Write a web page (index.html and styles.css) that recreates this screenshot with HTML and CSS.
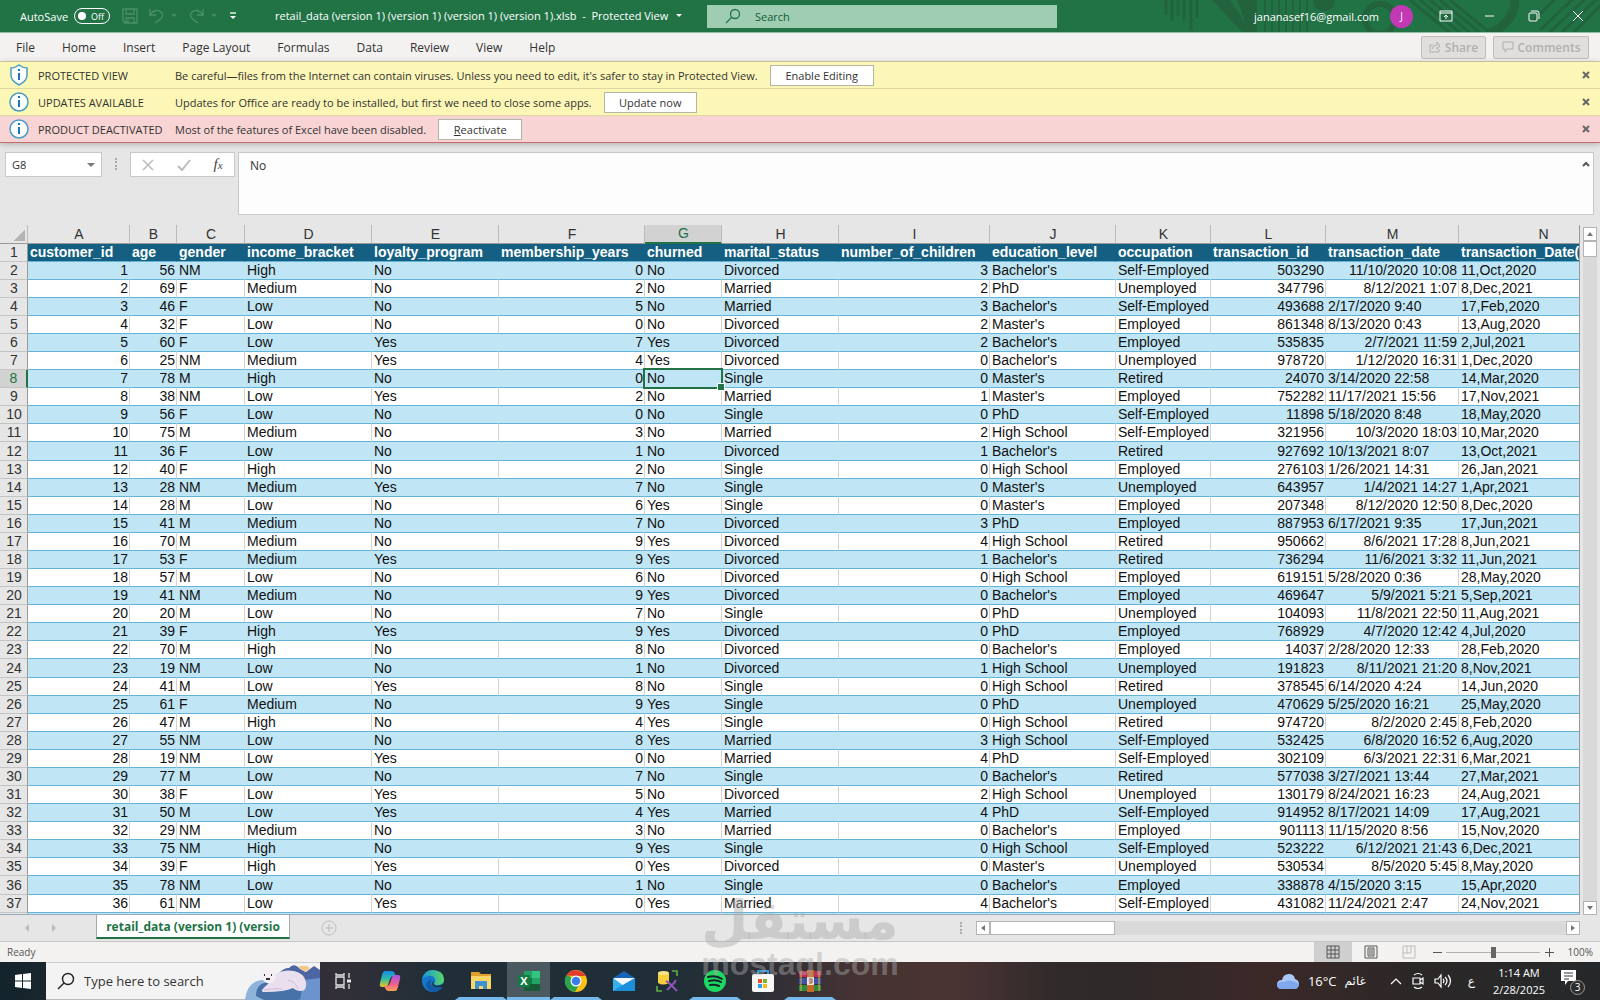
FILE: index.html
```html
<!DOCTYPE html>
<html lang="en">
<head>
    <meta charset="UTF-8">
    <meta name="viewport" content="width=device-width, initial-scale=1.0">
    <title>retail_data - Excel</title>
    <link rel="stylesheet" href="styles.css">
</head>
<body>
    <header class="titlebar">
        <svg class="titlebar-art" width="460" height="32" viewBox="0 0 460 32" fill="none" stroke="#22633e" stroke-width="3">
            <path d="M26 0v15M32 0v21M38 0v16M44 0v21M51 0v30M57 0v18"/>
            <path d="M72 0h18l22 32h-10zM97 0h20v32h-8z" fill="#22633e" stroke="none"/>
            <path d="M125 0v32M132 0v32M139 0v32M146 0v32M153 0v32M160 0v32M167 0v32" stroke-width="2"/>
            <circle cx="184" cy="0" r="11" fill="#22633e" stroke="none"/>
            <circle cx="240" cy="19" r="15" stroke-width="6"/>
            <path d="M270 0l44 36M280 0l44 36M290 0l44 36M300 0l44 36M310 0l44 36"/>
            <path d="M375 0q0 22-26 34" stroke-width="9"/>
            <path d="M400 30l36-34M410 32l36-34M422 32l36-34M434 32l30-30M392 22l26-26"/>
        </svg>
        <label class="autosave">AutoSave <span class="toggle"><input type="checkbox">Off</span></label>
        <div class="quick-access">
            <button aria-label="Save"><svg width="16" height="16" viewBox="0 0 16 16"><path d="M1 1h14v14H3l-2-2zM4 1v5h8V1M4 15v-5h8v5M6 12v3"/></svg></button>
            <button aria-label="Undo"><svg width="30" height="16" viewBox="0 0 30 16"><path d="M2 1v6h6M2 7c3-5 8-6 11-3s2 6-6 11"/><path d="M24 6l2 2 2-2"/></svg></button>
            <button aria-label="Redo"><svg width="30" height="16" viewBox="0 0 30 16"><path d="M15 1v6H9M15 7C12 2 7 1 4 4s-2 6 6 11"/><path d="M24 6l2 2 2-2"/></svg></button>
            <button class="customize" aria-label="Customize toolbar"><svg width="10" height="10" viewBox="0 0 10 10"><path d="M2 2h6"/><path d="M2 5h6L5 8z" fill="#fff" stroke="none"/></svg></button>
        </div>
        <div class="doc-title">retail_data (version 1) (version 1) (version 1) (version 1).xlsb&nbsp; -&nbsp; Protected View <span class="caret"></span></div>
        <div class="search">
            <svg width="16" height="16" viewBox="0 0 16 16" fill="none" stroke="#217346" stroke-width="1.3"><circle cx="10" cy="6" r="4.5"/><path d="M7 9l-6 6"/></svg>
            <input type="search" aria-label="Search" placeholder="Search">
        </div>
        <div class="account">
            <span>jananasef16@gmail.com</span>
            <span class="avatar">J</span>
        </div>
        <div class="window-buttons">
            <button aria-label="Ribbon display options"><svg width="14" height="12" viewBox="0 0 14 12"><path d="M1 1h12v10H1zM1 3h12M7 9V5M5 7l2-2 2 2"/></svg></button>
            <button aria-label="Minimize"><svg width="12" height="12" viewBox="0 0 12 12"><path d="M1 6h9"/></svg></button>
            <button aria-label="Restore"><svg width="12" height="12" viewBox="0 0 12 12"><path d="M1 4q0-1 1-1h6q1 0 1 1v6q0 1-1 1H2q-1 0-1-1zM3 1h6q2 0 2 2v6"/></svg></button>
            <button aria-label="Close"><svg width="12" height="12" viewBox="0 0 12 12"><path d="M1 1l10 10M11 1L1 11"/></svg></button>
        </div>
    </header>

    <nav class="ribbon-tabs">
        <button>File</button>
        <button>Home</button>
        <button>Insert</button>
        <button>Page Layout</button>
        <button>Formulas</button>
        <button>Data</button>
        <button>Review</button>
        <button>View</button>
        <button>Help</button>
        <div class="ribbon-right">
            <button class="share" disabled><svg width="12" height="12" viewBox="0 0 12 12"><path d="M4 4H1v7h9V8M3 8q1-4 5-4V1l3 4-3 3V6"/></svg>Share</button>
            <button class="comments" disabled><svg width="12" height="12" viewBox="0 0 12 12"><path d="M1 1h10v7H5l-2 3V8H1z"/></svg>Comments</button>
        </div>
    </nav>

    <section class="messages">
        <div class="message">
            <svg class="message-icon" width="20" height="22" viewBox="0 0 20 22"><path d="M10 1q4 3 8 3v7q0 6-8 10Q2 17 2 11V4q4 0 8-3z" fill="#fff" stroke="#4a9cc4" stroke-width="1.5"/><path d="M10 9v7M10 5v2" stroke="#1a75c0" stroke-width="2"/></svg>
            <span class="message-title">PROTECTED VIEW</span>
            <span>Be careful—files from the Internet can contain viruses. Unless you need to edit, it's safer to stay in Protected View.</span>
            <button class="message-action enable">Enable Editing</button>
            <button class="message-close" aria-label="Close"><svg width="8" height="8" viewBox="0 0 8 8"><path d="M1 1l6 6M7 1L1 7"/></svg></button>
        </div>
        <div class="message">
            <svg class="message-icon" width="20" height="22" viewBox="0 0 20 22"><circle cx="10" cy="11" r="9" fill="#fff" stroke="#4a9cc4" stroke-width="1.5"/><path d="M10 9v7M10 5v2" stroke="#1a75c0" stroke-width="2"/></svg>
            <span class="message-title">UPDATES AVAILABLE</span>
            <span>Updates for Office are ready to be installed, but first we need to close some apps.</span>
            <button class="message-action update">Update now</button>
            <button class="message-close" aria-label="Close"><svg width="8" height="8" viewBox="0 0 8 8"><path d="M1 1l6 6M7 1L1 7"/></svg></button>
        </div>
        <div class="message error">
            <svg class="message-icon" width="20" height="22" viewBox="0 0 20 22"><circle cx="10" cy="11" r="9" fill="#fff" stroke="#4a9cc4" stroke-width="1.5"/><path d="M10 9v7M10 5v2" stroke="#1a75c0" stroke-width="2"/></svg>
            <span class="message-title">PRODUCT DEACTIVATED</span>
            <span>Most of the features of Excel have been disabled.</span>
            <button class="message-action reactivate"><u>R</u>eactivate</button>
            <button class="message-close" aria-label="Close"><svg width="8" height="8" viewBox="0 0 8 8"><path d="M1 1l6 6M7 1L1 7"/></svg></button>
        </div>
    </section>

    <section class="formula-bar">
        <div class="name-box">
            <input type="text" aria-label="Name box" value="G8">
            <span class="caret"></span>
        </div>
        <span class="dots"></span>
        <div class="formula-buttons">
            <button aria-label="Cancel"><svg width="12" height="12" viewBox="0 0 12 12"><path d="M1 1l10 10M11 1L1 11"/></svg></button>
            <button aria-label="Enter"><svg width="14" height="12" viewBox="0 0 14 12"><path d="M1 7l4 4 8-10" stroke-width="2"/></svg></button>
            <button class="fx" aria-label="Insert function">f<sub>x</sub></button>
        </div>
        <div class="formula-input">
            <textarea aria-label="Formula">No</textarea>
            <svg width="8" height="8" viewBox="0 0 8 8"><path d="M1 6l3-3 3 3" fill="none" stroke="#555" stroke-width="2"/></svg>
        </div>
    </section>

    <main class="grid-area">
        <div class="grid">
            <table class="sheet">
                <colgroup>
                    <col class="col-row"><col class="col-a"><col class="col-b"><col class="col-c"><col class="col-d">
                    <col class="col-e"><col class="col-f"><col class="col-g"><col class="col-h"><col class="col-i">
                    <col class="col-j"><col class="col-k"><col class="col-l"><col class="col-m"><col class="col-n">
                </colgroup>
                <thead>
                    <tr>
                        <th class="corner"></th>
                        <th>A</th><th>B</th><th>C</th><th>D</th><th>E</th><th>F</th><th class="current">G</th>
                        <th>H</th><th>I</th><th>J</th><th>K</th><th>L</th><th>M</th><th>N</th>
                    </tr>
                </thead>
                <tbody id="rows"></tbody>
            </table>
        </div>
        <div class="v-scroll">
            <button class="scroll-btn up" aria-label="Scroll up"></button>
            <div class="v-thumb"></div>
            <button class="scroll-btn down" aria-label="Scroll down"></button>
        </div>
    </main>

    <section class="sheet-tabs">
        <div class="tab-arrows"><span class="arrow-left"></span><span class="arrow-right"></span></div>
        <button class="sheet-tab">retail_data (version 1) (versio</button>
        <button class="add-sheet" aria-label="New sheet"><svg width="16" height="16" viewBox="0 0 16 16"><circle cx="8" cy="8" r="7"/><path d="M8 4v8M4 8h8"/></svg></button>
        <span class="dots"></span>
        <div class="h-scroll">
            <button class="scroll-btn left" aria-label="Scroll left"></button>
            <div class="h-thumb"></div>
            <button class="scroll-btn right" aria-label="Scroll right"></button>
        </div>
    </section>

    <section class="status">
        <span>Ready</span>
        <div class="status-right">
            <button class="view selected" aria-label="Normal"><svg width="14" height="14" viewBox="0 0 14 14"><path d="M1 1h12v12H1zM5 1v12M9 1v12M1 5h12M1 9h12"/></svg></button>
            <button class="view" aria-label="Page layout"><svg width="14" height="14" viewBox="0 0 14 14"><path d="M1 1h12v12H1zM4 3h6v8H4zM5 5h4M5 7h4M5 9h4"/></svg></button>
            <button class="view faded" aria-label="Page break preview"><svg width="14" height="14" viewBox="0 0 14 14"><path d="M1 1h12v12H1zM5 1v7M9 1v7M1 8h8"/></svg></button>
            <button class="zoom-btn" aria-label="Zoom out"><svg width="9" height="9" viewBox="0 0 9 9"><path d="M0 4.5h9"/></svg></button>
            <input class="zoom" type="range" aria-label="Zoom" min="0" max="200" value="100">
            <button class="zoom-btn" aria-label="Zoom in"><svg width="9" height="9" viewBox="0 0 9 9"><path d="M0 4.5h9M4.5 0v9"/></svg></button>
            <span class="zoom-value">100%</span>
        </div>
    </section>

    <footer class="taskbar">
        <button class="start" aria-label="Start"><svg width="16" height="16" viewBox="0 0 16 16" fill="#fff"><path d="M0 2l7-1v6.5H0zM8 1l8-1v7.5H8zM0 8.5h7V15l-7-1zM8 8.5h8V16l-8-1z"/></svg></button>
        <div class="task-search">
            <svg width="18" height="18" viewBox="0 0 18 18" fill="none" stroke="#222" stroke-width="1.4"><circle cx="11" cy="7" r="5.5"/><path d="M7 11l-6 6"/></svg>
            <input type="search" aria-label="Windows search" placeholder="Type here to search">
            <svg class="bear" width="76" height="38" viewBox="0 0 76 38">
                <path d="M32 14q8-9 13-8 5-6 11 1l6 3 8-6 6 4v20H32z" fill="#4d65a3"/>
                <path d="M54 5q8-3 12 1l-5 4z" fill="#f4c88a"/>
                <path d="M1 38q2-22 24-20l45 2 6-2v20z" fill="#8fb4dc"/>
                <path d="M12 34q0-14 14-14l44-2q6 6 6 18l-24 2H20z" fill="#4672a8"/>
                <path d="M60 18l16-2v22H56z" fill="#6d93cf"/>
                <path d="M18 28q2-3 6-6 3-5 8-10 8-5 18-3 10 2 12 11 1 9-5 9-5 0-8-3-8 4-28 4-4 0-3-2z" fill="#eadfee"/>
                <path d="M17 10q-1-4 2-3l3 1h4l3-2q3 0 2 4 2 5-1 9-4 4-9 1-6-4-4-10z" fill="#f6eef5"/>
                <path d="M20 13h1M27 13h1M22 17h4" stroke="#333" stroke-width="2"/>
                <path d="M20 28q8-2 18-1M44 18q8 2 10 9" stroke="#cdbcd8" fill="none"/>
            </svg>
        </div>
        <button class="task-view" aria-label="Task view"><svg width="18" height="18" viewBox="0 0 18 18" fill="none" stroke="#e6e6e6" stroke-width="1.3"><path d="M2 1v2h8V1M2 5h8v8H2zM2 17v-2h8v2M15 1v5M15 12v5"/><path d="M13 9h4" stroke-width="3"/></svg></button>
        <div class="apps">
            <button aria-label="Copilot"><svg width="22" height="22" viewBox="0 0 22 22"><defs><linearGradient id="cp1" x1="0" y1="0" x2="0" y2="1"><stop offset="0" stop-color="#1788e8"/><stop offset=".5" stop-color="#2dbfa0"/><stop offset="1" stop-color="#f2c321"/></linearGradient><linearGradient id="cp2" x1="0" y1="0" x2="0" y2="1"><stop offset="0" stop-color="#a454e8"/><stop offset=".6" stop-color="#f0628a"/><stop offset="1" stop-color="#ffa64d"/></linearGradient></defs><path d="M6 1h7q2 0 3 3l1 2h-3q-2 0-3 3l-2 6q-1 2-3 2H3q-3 0-2-4l2-8q1-4 3-4z" fill="url(#cp1)"/><path d="M16 21H9q-2 0-3-3l-1-2h3q2 0 3-3l2-6q1-2 3-2h3q3 0 2 4l-2 8q-1 4-3 4z" fill="url(#cp2)"/></svg></button>
            <button aria-label="Edge"><svg width="24" height="24" viewBox="0 0 24 24"><defs><linearGradient id="ed" x1="0" y1="0" x2="1" y2="0"><stop offset="0" stop-color="#1695dc"/><stop offset="1" stop-color="#5bd666"/></linearGradient></defs><circle cx="12" cy="12" r="11" fill="#1477cc"/><path d="M1 10Q3 1 12 1q11 1 11 9 0 6-7 6-3 0-3-2 2-1 1-4-2-4-7-3-4 1-6 3z" fill="url(#ed)"/><path d="M10 12q-2 8 12 6-4 5-10 5-7-2-7-7 1-5 6-6z" fill="#155aa5"/><path d="M13 12q-2 4 3 5 4 0 7-3l-1 4q-7 1-10-1-2-3 1-5z" fill="#1f2d36"/></svg></button>
            <button class="running" aria-label="File Explorer"><svg width="22" height="20" viewBox="0 0 22 20"><path d="M1 1h8l2 2h10v5H1z" fill="#e0a12c"/><path d="M1 5h20v13H1z" fill="#fbd667"/><path d="M5 18v-8h12v8h-4v-3H9v3z" fill="#3d92d0"/></svg></button>
            <button class="running active" aria-label="Excel"><svg width="24" height="22" viewBox="0 0 24 22"><path d="M7 1h8v7H7z" fill="#21a366"/><path d="M15 1h8v7h-8z" fill="#33c481"/><path d="M7 8h8v6H7z" fill="#107c41"/><path d="M15 8h8v6h-8z" fill="#21a366"/><path d="M7 14h16v7H7z" fill="#185c37"/><rect x="1" y="5" width="12" height="12" rx="1" fill="#107c41"/><text x="7" y="15" text-anchor="middle" class="excel-x">X</text></svg></button>
            <button class="running" aria-label="Chrome"><svg width="24" height="24" viewBox="0 0 24 24"><circle cx="12" cy="12" r="11" fill="#fbc116"/><path d="M12 12L3 5.5A11 11 0 0 0 11 23l5-9z" fill="#2ba24c"/><path d="M2.500 6.500A11 11 0 0 1 21.500 7H12z" fill="#e33b2e"/><circle cx="12" cy="12" r="5.5" fill="#fff"/><circle cx="12" cy="12" r="4.3" fill="#3b7ded"/></svg></button>
            <button aria-label="Mail"><svg width="24" height="22" viewBox="0 0 24 22"><path d="M1 8l11-7 11 7v13H1z" fill="#1665b8"/><path d="M2 8h20v8H2z" fill="#f4f8fc"/><path d="M1 8l11 8 11-8v13H1z" fill="#36b1ec"/><path d="M1 21l13-8 9-5v13z" fill="#1c8fdc"/></svg></button>
            <button aria-label="Database tools"><svg width="22" height="22" viewBox="0 0 22 22"><path d="M16 1h5v5M1 16v5h5" fill="none" stroke="#5fae42" stroke-width="1.6"/><path d="M2 3v10q5 3 11 0V3z" fill="#f6cf3b"/><ellipse cx="7.5" cy="3" rx="5.5" ry="2" fill="#fae588"/><path d="M12 12l7 7M19 12l-8 8M10 11l3 2M20 10l-2 3M17 17l4 4" stroke="#8e55b5" stroke-width="2"/></svg></button>
            <button class="running" aria-label="Spotify"><svg width="24" height="24" viewBox="0 0 24 24"><circle cx="12" cy="12" r="11" fill="#1ed760"/><path d="M5 8q8-2 14 2M6 12q7-2 12 1M7 16q5-1 9 1" fill="none" stroke="#17212a" stroke-width="2" stroke-linecap="round"/></svg></button>
            <button aria-label="Microsoft Store"><svg width="24" height="24" viewBox="0 0 24 24"><path d="M7 6V2h10v4" fill="none" stroke="#2a9fe0" stroke-width="2"/><rect x="1" y="5" width="22" height="18" rx="2" fill="#f7f7f7"/><path d="M7 10h4v4H7z" fill="#e74f2e"/><path d="M12 10h4v4h-4z" fill="#7fb52a"/><path d="M7 15h4v4H7z" fill="#2aa0e6"/><path d="M12 15h4v4h-4z" fill="#f9b91d"/></svg></button>
            <button class="running" aria-label="WinRAR"><svg width="24" height="22" viewBox="0 0 24 22"><path d="M1 1h22v6H1z" fill="#c02f5b"/><path d="M1 8h22v6H1z" fill="#4052a8"/><path d="M1 15h22v6H1z" fill="#2c8c3c"/><path d="M3 1v20M21 1v20" stroke="#d9b64e"/><path d="M9 0h7v22H9z" fill="#c9682a"/><rect x="9" y="7" width="7" height="8" fill="#f1e6d2"/><path d="M11 9h3v4h-3M11 11h3" fill="none" stroke="#9a3f1d"/></svg></button>
        </div>
        <div class="tray">
            <div class="weather">
                <svg width="24" height="18" viewBox="0 0 24 18"><path d="M6 17q-5 0-5-4.5T6 8q1-6 7-6 5 0 6 5 4 1 4 5t-4 5z" fill="#a9c8f6"/><path d="M1 12q3-3 7-2 6-4 15 2-1 5-4 5H6q-5 0-5-5z" fill="#7fa8ee"/></svg>
                <span>16°C</span>
                <span class="condition" lang="ar">غائم</span>
            </div>
            <div class="tray-icons">
                <svg width="12" height="12" viewBox="0 0 12 12"><path d="M1 9l5-5 5 5"/></svg>
                <svg width="14" height="18" viewBox="0 0 14 18"><path d="M2 6h7v6H2zM9 8l3-2v6l-3-2M3 3q4-3 8 0M3 15q4 3 8 0"/></svg>
                <svg width="18" height="16" viewBox="0 0 18 16"><path d="M1 6h3l3-4v12l-3-4H1zM9 6q2 2 0 4M11 4q4 4 0 8M14 2q5 6 0 12"/></svg>
            </div>
            <span class="language" lang="ar">ع</span>
            <div class="clock"><span>1:14 AM</span><span>2/28/2025</span></div>
            <button class="notifications" aria-label="Notifications"><svg width="16" height="16" viewBox="0 0 16 16"><path d="M0 1h15v11H7l-3 4v-4H0z" fill="#fff"/><path d="M3 4h9M3 7h9M3 10h5" stroke="#333"/></svg><span class="count">3</span></button>
        </div>
    </footer>

    <div class="watermark">
        <span class="mark-ar" lang="ar">مستقل</span>
        <span class="mark-en">mostaql.com</span>
    </div>

    <script src="script.js"></script>
</body>
</html>
```
FILE: styles.css
```css
* {
    box-sizing: border-box;
}

body {
    margin: 0;
    height: 100vh;
    display: flex;
    flex-direction: column;
    overflow: hidden;
    position: relative;
    background-color: #e6e6e6;
    font-family: "Open Sans", "Noto Sans", sans-serif;
    font-size: 11px;
    color: #333;
}

button {
    border: none;
    background: none;
    padding: 0;
    font: inherit;
    color: inherit;
    display: flex;
    align-items: center;
    justify-content: center;
}

input,
textarea {
    border: none;
    outline: none;
    padding: 0;
    background: none;
    font: inherit;
    color: inherit;
    min-width: 0;
}

svg {
    flex-shrink: 0;
}

.caret {
    border: 4px solid transparent;
    border-top-color: currentColor;
    border-bottom: none;
}

.dots {
    width: 1px;
    height: 12px;
    border-left: 2px dotted #aaa;
}

/* Title bar */
.titlebar {
    height: 33px;
    flex-shrink: 0;
    display: flex;
    align-items: center;
    position: relative;
    background-color: #217346;
    border-bottom: 1px solid #8fbfa3;
    color: #fff;
    padding-left: 20px;
}

.titlebar > * {
    position: relative;
}

.titlebar .titlebar-art {
    position: absolute;
    right: 0;
    top: 0;
}

.autosave {
    display: flex;
    align-items: center;
    gap: 6px;
    width: 90px;
}

.toggle {
    display: flex;
    align-items: center;
    justify-content: space-between;
    width: 36px;
    height: 16px;
    padding: 0 5px 0 3px;
    border: 1px solid #fff;
    border-radius: 8px;
    font-size: 9px;
}

.toggle input {
    appearance: none;
    width: 8px;
    height: 8px;
    margin: 0;
    border-radius: 50%;
    background-color: #fff;
}

.quick-access {
    display: flex;
    align-items: center;
    gap: 10px;
    margin-left: 12px;
    width: 153px;
}

.quick-access svg {
    fill: none;
    stroke: #4b9068;
    stroke-width: 1.3;
}

.quick-access .customize svg {
    stroke: #fff;
}

.doc-title {
    display: flex;
    align-items: center;
    gap: 8px;
    width: 432px;
    padding-bottom: 2px;
    white-space: nowrap;
}

.doc-title .caret {
    border-width: 3px;
    border-bottom: none;
}

.search {
    display: flex;
    align-items: center;
    gap: 14px;
    width: 350px;
    height: 23px;
    padding: 0 18px;
    background-color: #9fcdb3;
    color: #145c34;
}

.search input {
    flex: 1;
}

.search input::placeholder,
.task-search input::placeholder {
    color: inherit;
    opacity: 1;
}

.account {
    display: flex;
    align-items: center;
    gap: 11px;
    margin-left: auto;
}

.avatar {
    width: 23px;
    height: 23px;
    border-radius: 50%;
    background-color: #c239b3;
    font-size: 10px;
    line-height: 23px;
    text-align: center;
}

.window-buttons {
    display: flex;
    margin-left: 11px;
}

.window-buttons button {
    width: 44px;
    height: 32px;
}

.window-buttons svg {
    fill: none;
    stroke: #fff;
}

/* Ribbon */
.ribbon-tabs {
    height: 29px;
    flex-shrink: 0;
    display: flex;
    align-items: center;
    gap: 27px;
    padding: 0 11px 0 16px;
    background-color: #f3f2f1;
    border-bottom: 1px solid #d8d0ac;
    font-size: 12px;
}

.ribbon-right {
    display: flex;
    gap: 7px;
    margin-left: auto;
}

.ribbon-right button {
    height: 23px;
    gap: 4px;
    background-color: #e1dfdd;
    border: 1px solid #bebbb8;
    border-radius: 2px;
    color: #b1afad;
    font-weight: 600;
}

.ribbon-right svg {
    fill: none;
    stroke: #b1afad;
}

.share {
    width: 65px;
}

.comments {
    width: 96px;
}

/* Message bars */
.messages {
    position: relative;
    flex-shrink: 0;
    box-shadow: 0 1px 6px rgba(0, 0, 0, 0.25);
}

.message {
    height: 27px;
    display: flex;
    align-items: center;
    padding: 0 10px 0 9px;
    background-color: #fcf7b6;
    border-bottom: 1px solid #e0d8a0;
}

.message.error {
    background-color: #f8d4d4;
    border-bottom-color: #c46a6a;
}

.message-icon {
    margin-right: 9px;
}

.message-title {
    width: 137px;
    white-space: nowrap;
}

.message-action {
    height: 21px;
    margin-left: 12px;
    background-color: #fff;
    border: 1px solid #b5b5a5;
}

.enable {
    width: 104px;
}

.update {
    width: 93px;
}

.reactivate {
    width: 84px;
}

.message-close {
    margin-left: auto;
}

.message-close svg {
    fill: none;
    stroke: #666;
    stroke-width: 2;
}

/* Formula bar */
.formula-bar {
    height: 82px;
    flex-shrink: 0;
    display: flex;
    align-items: flex-start;
    padding: 9px 6px 9px 5px;
}

.name-box {
    display: flex;
    align-items: center;
    width: 97px;
    height: 25px;
    padding: 0 6px;
    background-color: #fff;
    border: 1px solid #c8c8c8;
}

.name-box input {
    flex: 1;
}

.name-box .caret {
    color: #777;
}

.formula-bar .dots {
    margin: 6px 13px;
}

.formula-buttons {
    display: flex;
    align-items: center;
    justify-content: space-around;
    width: 105px;
    height: 25px;
    margin-right: 3px;
    background-color: #fff;
    border: 1px solid #c8c8c8;
}

.formula-buttons svg {
    fill: none;
    stroke: #bbb;
    stroke-width: 1.5;
}

.fx {
    font-family: "Liberation Serif", serif;
    font-style: italic;
    font-size: 15px;
    color: #444;
}

.fx sub {
    font-size: 11px;
}

.formula-input {
    flex: 1;
    display: flex;
    align-items: flex-start;
    height: 63px;
    padding: 4px 3px 4px 11px;
    background-color: #fdfdfd;
    border: 1px solid #c8c8c8;
}

.formula-input textarea {
    flex: 1;
    height: 50px;
    resize: none;
    font-size: 12px;
}

.formula-input svg {
    margin-top: 3px;
}

/* Grid */
.grid-area {
    flex: 1;
    min-height: 0;
    display: flex;
}

.grid {
    flex: 1;
    min-width: 0;
    overflow: hidden;
    border-right: 1px solid #999;
    border-bottom: 1px solid #9ab;
}

.sheet {
    width: 1628px;
    table-layout: fixed;
    border-collapse: separate;
    border-spacing: 0;
    background-color: #fff;
    font-family: "Liberation Sans", Arial, sans-serif;
    font-size: 14px;
    line-height: 17px;
    color: #111;
}

.col-row { width: 28px; }
.col-a { width: 102px; }
.col-b { width: 47px; }
.col-c { width: 68px; }
.col-d { width: 127px; }
.col-e { width: 127px; }
.col-f { width: 146px; }
.col-g { width: 77px; }
.col-h { width: 117px; }
.col-i { width: 151px; }
.col-j { width: 126px; }
.col-k { width: 95px; }
.col-l { width: 115px; }
.col-m { width: 133px; }
.col-n { width: 169px; }

.sheet th,
.sheet td {
    height: 18px;
    padding: 0 1px 0 2px;
    white-space: nowrap;
    overflow: hidden;
    text-align: left;
}

/* keep row edges in step with the scaled row height */
.sheet tbody tr:nth-child(12n) td {
    height: 19px;
}

.sheet thead th {
    height: 19px;
    background-color: #e6e6e6;
    border-right: 1px solid #bbb;
    border-bottom: 1px solid #999;
    font-weight: normal;
    text-align: center;
    color: #333;
}

.sheet thead th.corner {
    background-image: linear-gradient(135deg, transparent 50%, #b4b4b4 50%);
    background-size: 12px 12px;
    background-position: 13px 4px;
    background-repeat: no-repeat;
}

.sheet thead th.current {
    background-color: #d2d2d2;
    border-bottom: 2px solid #217346;
    color: #217346;
}

.sheet tbody th {
    background-color: #e6e6e6;
    border-right: 1px solid #999;
    border-bottom: 1px solid #c4c4c4;
    font-weight: normal;
    text-align: center;
    color: #333;
}

.sheet tbody th.current {
    background-color: #d2d2d2;
    border-right: 2px solid #217346;
    color: #217346;
}

.sheet td {
    border-right: 1px solid #d4d4d4;
    border-bottom: 1px solid #64b4d8;
}

.sheet .band td {
    background-color: #c0e6f5;
    border-right-color: #c0e6f5;
}

.sheet .head td {
    background-color: #156082;
    border-right-color: #156082;
    color: #fff;
    font-weight: bold;
}

.sheet td.num {
    text-align: right;
}

.sheet td.active {
    position: relative;
    overflow: visible;
}

.sheet td.active::before {
    content: "";
    position: absolute;
    top: -2px;
    right: -2px;
    bottom: -2px;
    left: -2px;
    border: 2px solid #217346;
}

.sheet td.active::after {
    content: "";
    position: absolute;
    right: -4px;
    bottom: -4px;
    width: 6px;
    height: 6px;
    background-color: #217346;
    border: 1px solid #fff;
}

/* Scrollbars */
.scroll-btn {
    width: 14px;
    height: 14px;
    flex-shrink: 0;
    background-color: #fff;
    border: 1px solid #b4b4b4;
}

.scroll-btn::before {
    content: "";
    border: 3px solid transparent;
}

.scroll-btn.up::before {
    border-bottom: 4px solid #777;
    border-top: none;
}

.scroll-btn.down::before {
    border-top: 4px solid #777;
    border-bottom: none;
}

.scroll-btn.left::before {
    border-right: 4px solid #777;
    border-left: none;
}

.scroll-btn.right::before {
    border-left: 4px solid #777;
    border-right: none;
}

.v-scroll {
    display: flex;
    flex-direction: column;
    width: 14px;
    margin: 2px 3px 0 3px;
    background-color: #d9d9d9;
}

.v-thumb {
    height: 16px;
    background-color: #fff;
    border: 1px solid #b4b4b4;
}

.v-scroll .down {
    margin-top: auto;
}

.sheet-tabs {
    height: 27px;
    flex-shrink: 0;
    display: flex;
    align-items: center;
    padding: 0 20px 0 25px;
    border-bottom: 1px solid #c6c6c6;
}

.tab-arrows {
    display: flex;
    gap: 23px;
    width: 71px;
}

.arrow-left {
    border: 4px solid transparent;
    border-right-color: #bbb;
    border-left: none;
}

.arrow-right {
    border: 4px solid transparent;
    border-left-color: #bbb;
    border-right: none;
}

.sheet-tab {
    width: 194px;
    height: 24px;
    align-self: flex-start;
    background-color: #fff;
    border-right: 1px solid #aaa;
    border-left: 1px solid #aaa;
    border-bottom: 2px solid #217346;
    color: #217346;
    font-size: 12px;
    font-weight: bold;
    white-space: nowrap;
}

.add-sheet {
    margin-left: 31px;
}

.add-sheet svg {
    fill: none;
    stroke: #bbb;
}

.sheet-tabs .dots {
    margin-left: auto;
    margin-right: 14px;
}

.h-scroll {
    display: flex;
    width: 604px;
    height: 14px;
    background-color: #d9d9d9;
}

.h-thumb {
    width: 125px;
    background-color: #fff;
    border: 1px solid #b4b4b4;
}

.h-scroll .right {
    margin-left: auto;
}

/* Status bar */
.status {
    height: 20px;
    flex-shrink: 0;
    display: flex;
    align-items: center;
    justify-content: space-between;
    padding: 0 7px;
    background-color: #f3f2f1;
    font-size: 10px;
    color: #555;
}

.status-right {
    display: flex;
    align-items: center;
}

.view {
    width: 38px;
    height: 20px;
}

.view.selected {
    background-color: #cfcfcf;
}

.status svg {
    fill: none;
    stroke: #555;
}

.view.faded svg {
    stroke: #bbb;
}

.zoom-btn {
    width: 18px;
}

.zoom {
    appearance: none;
    width: 94px;
    height: 20px;
    margin: 0;
    background: linear-gradient(#b0b0b0, #b0b0b0) center / 100% 1px no-repeat;
}

.zoom::-webkit-slider-thumb {
    appearance: none;
    width: 5px;
    height: 11px;
    background-color: #666;
}

.zoom-value {
    width: 35px;
    text-align: right;
}

/* Taskbar */
.taskbar {
    height: 38px;
    flex-shrink: 0;
    display: flex;
    align-items: stretch;
    background: linear-gradient(90deg, #14242c 0%, #332f38 21%, #1f2e37 28%, #1f2e37 42%, #2c2f36 47%, #473333 54%, #4a3333 60%, #302a2a 66%, #2e2828 70%, #3b2928 79%, #2c2727 88%, #25282a 100%);
    color: #fff;
}

.start {
    width: 46px;
}

.task-search {
    display: flex;
    align-items: center;
    width: 274px;
    padding-left: 11px;
    background-color: #f3f3f3;
    border-top: 1px solid #ccc;
    border-bottom: 1px solid #bbb;
    color: #333;
}

.task-search input {
    flex: 1;
    margin-left: 9px;
    font-size: 13px;
}

.task-view {
    width: 45px;
    margin-right: 3px;
}

.apps {
    display: flex;
    width: 468px;
}

.apps button {
    flex: 1 1 0;
    min-width: 0;
    border-top: 3px solid transparent;
    border-bottom: 3px solid transparent;
}

.apps .running {
    border-bottom-color: #76b9ed;
    border-left: 4px solid transparent;
    border-right: 4px solid transparent;
}

.apps .running.active {
    background-color: #4b5961;
    border-left: none;
    border-right: none;
    border-top-color: #4b5961;
}

.excel-x {
    font-family: "Open Sans", sans-serif;
    font-size: 11px;
    font-weight: bold;
    fill: #fff;
}

.tray {
    display: flex;
    align-items: center;
    margin-left: auto;
}

.weather {
    display: flex;
    align-items: center;
    gap: 8px;
    font-size: 13px;
    margin-right: 24px;
}

.condition,
.language {
    font-family: "DejaVu Sans", sans-serif;
    font-size: 12px;
}

.tray-icons {
    display: flex;
    align-items: center;
    gap: 9px;
}

.tray-icons svg {
    fill: none;
    stroke: #fff;
    stroke-width: 1.2;
}

.language {
    margin-left: 16px;
}

.clock {
    display: flex;
    flex-direction: column;
    align-items: center;
    width: 60px;
    margin-left: 14px;
    line-height: 17px;
}

.notifications {
    position: relative;
    width: 28px;
    height: 28px;
    margin: 0 15px 0 8px;
    align-items: flex-start;
    justify-content: flex-start;
    padding: 2px 4px;
}

.count {
    position: absolute;
    right: 0;
    bottom: 0;
    width: 15px;
    height: 15px;
    border: 1px solid #999;
    border-radius: 50%;
    background-color: #2c2c2c;
    font-size: 10px;
    line-height: 13px;
}

.watermark {
    position: absolute;
    left: 0;
    right: 0;
    bottom: 20px;
    display: flex;
    flex-direction: column;
    align-items: center;
    pointer-events: none;
    color: rgba(170, 170, 170, 0.45);
    font-weight: bold;
}

.mark-ar {
    font-family: "DejaVu Sans", sans-serif;
    font-size: 54px;
    line-height: 54px;
}

.mark-en {
    font-family: "Liberation Sans", Arial, sans-serif;
    font-size: 32px;
    line-height: 32px;
}
```
FILE: script.js
```js
const header = ['customer_id', 'age', 'gender', 'income_bracket', 'loyalty_program', 'membership_years',
    'churned', 'marital_status', 'number_of_children', 'education_level', 'occupation',
    'transaction_id', 'transaction_date', 'transaction_Date('];

// everything after customer_id, which is just the running number
const data = [
    "56|NM|High|No|0|No|Divorced|3|Bachelor's|Self-Employed|503290|11/10/2020 10:08|11,Oct,2020",
    "69|F|Medium|No|2|No|Married|2|PhD|Unemployed|347796|8/12/2021 1:07|8,Dec,2021",
    "46|F|Low|No|5|No|Married|3|Bachelor's|Self-Employed|493688|2/17/2020 9:40|17,Feb,2020",
    "32|F|Low|No|0|No|Divorced|2|Master's|Employed|861348|8/13/2020 0:43|13,Aug,2020",
    "60|F|Low|Yes|7|Yes|Divorced|2|Bachelor's|Employed|535835|2/7/2021 11:59|2,Jul,2021",
    "25|NM|Medium|Yes|4|Yes|Divorced|0|Bachelor's|Unemployed|978720|1/12/2020 16:31|1,Dec,2020",
    "78|M|High|No|0|No|Single|0|Master's|Retired|24070|3/14/2020 22:58|14,Mar,2020",
    "38|NM|Low|Yes|2|No|Married|1|Master's|Employed|752282|11/17/2021 15:56|17,Nov,2021",
    "56|F|Low|No|0|No|Single|0|PhD|Self-Employed|11898|5/18/2020 8:48|18,May,2020",
    "75|M|Medium|No|3|No|Married|2|High School|Self-Employed|321956|10/3/2020 18:03|10,Mar,2020",
    "36|F|Low|No|1|No|Divorced|1|Bachelor's|Retired|927692|10/13/2021 8:07|13,Oct,2021",
    "40|F|High|No|2|No|Single|0|High School|Employed|276103|1/26/2021 14:31|26,Jan,2021",
    "28|NM|Medium|Yes|7|No|Single|0|Master's|Unemployed|643957|1/4/2021 14:27|1,Apr,2021",
    "28|M|Low|No|6|Yes|Single|0|Master's|Employed|207348|8/12/2020 12:50|8,Dec,2020",
    "41|M|Medium|No|7|No|Divorced|3|PhD|Employed|887953|6/17/2021 9:35|17,Jun,2021",
    "70|M|Medium|No|9|Yes|Divorced|4|High School|Retired|950662|8/6/2021 17:28|8,Jun,2021",
    "53|F|Medium|Yes|9|Yes|Divorced|1|Bachelor's|Retired|736294|11/6/2021 3:32|11,Jun,2021",
    "57|M|Low|No|6|No|Divorced|0|High School|Employed|619151|5/28/2020 0:36|28,May,2020",
    "41|NM|Medium|No|9|Yes|Divorced|0|Bachelor's|Employed|469647|5/9/2021 5:21|5,Sep,2021",
    "20|M|Low|No|7|No|Single|0|PhD|Unemployed|104093|11/8/2021 22:50|11,Aug,2021",
    "39|F|High|Yes|9|Yes|Divorced|0|PhD|Employed|768929|4/7/2020 12:42|4,Jul,2020",
    "70|M|High|No|8|No|Divorced|0|Bachelor's|Employed|14037|2/28/2020 12:33|28,Feb,2020",
    "19|NM|Low|No|1|No|Divorced|1|High School|Unemployed|191823|8/11/2021 21:20|8,Nov,2021",
    "41|M|Low|Yes|8|No|Single|0|High School|Retired|378545|6/14/2020 4:24|14,Jun,2020",
    "61|F|Medium|No|9|Yes|Single|0|PhD|Unemployed|470629|5/25/2020 16:21|25,May,2020",
    "47|M|High|No|4|Yes|Single|0|High School|Retired|974720|8/2/2020 2:45|8,Feb,2020",
    "55|NM|Low|No|8|Yes|Married|3|High School|Self-Employed|532425|6/8/2020 16:52|6,Aug,2020",
    "19|NM|Low|Yes|0|No|Married|4|PhD|Self-Employed|302109|6/3/2021 22:31|6,Mar,2021",
    "77|M|Low|No|7|No|Single|0|Bachelor's|Retired|577038|3/27/2021 13:44|27,Mar,2021",
    "38|F|Low|Yes|5|No|Divorced|2|High School|Unemployed|130179|8/24/2021 16:23|24,Aug,2021",
    "50|M|Low|Yes|4|Yes|Married|4|PhD|Self-Employed|914952|8/17/2021 14:09|17,Aug,2021",
    "29|NM|Medium|No|3|No|Married|0|Bachelor's|Employed|901113|11/15/2020 8:56|15,Nov,2020",
    "75|NM|High|No|9|Yes|Single|0|High School|Self-Employed|523222|6/12/2021 21:43|6,Dec,2021",
    "39|F|High|Yes|0|Yes|Divorced|0|Master's|Unemployed|530534|8/5/2020 5:45|8,May,2020",
    "78|NM|Low|No|1|No|Single|0|Bachelor's|Employed|338878|4/15/2020 3:15|15,Apr,2020",
    "61|NM|Low|Yes|0|Yes|Married|4|Bachelor's|Self-Employed|431082|11/24/2021 2:47|24,Nov,2021"
];

const tbody = document.getElementById('rows');

// numbers and real dates go right, month/day mixups (day > 12) stay text
function isNumeric(value) {
    const date = value.match(/^\d+\/(\d+)\/\d{4} /);
    return date ? Number(date[1]) <= 12 : /^\d+$/.test(value);
}

function addRow(number, cells, className) {
    const tr = tbody.insertRow();
    tr.className = className;
    const th = document.createElement('th');
    th.textContent = number;
    if (number === 8) th.className = 'current';
    tr.appendChild(th);
    cells.forEach(function(value, i) {
        const td = tr.insertCell();
        td.textContent = value;
        if (isNumeric(value)) td.classList.add('num');
        if (number === 8 && i === 6) td.classList.add('active');
    });
}

addRow(1, header, 'head');
data.forEach(function(line, i) {
    addRow(i + 2, [String(i + 1)].concat(line.split('|')), i % 2 === 0 ? 'band' : '');
});
addRow('', header.map(() => ''), 'band');
```
